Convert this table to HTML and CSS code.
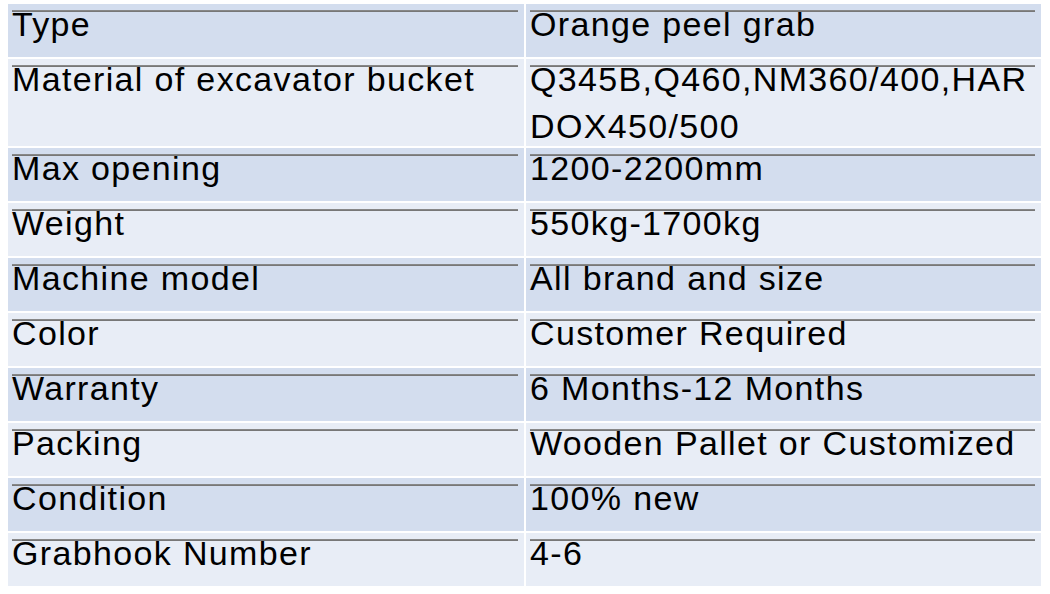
FILE: index.html
```html
<!DOCTYPE html>
<html>
<head>
<meta charset="utf-8">
<link rel="stylesheet" href="styles.css">
</head>
<body>
<div class="spec">
  <div class="cell odd"><p>Type</p></div>
  <div class="cell odd"><p>Orange peel grab</p></div>
  <div class="cell even tall"><p>Material of excavator bucket</p></div>
  <div class="cell even tall"><p>Q345B,Q460,NM360/400,HAR<br>DOX450/500</p></div>
  <div class="cell odd"><p>Max opening</p></div>
  <div class="cell odd"><p>1200-2200mm</p></div>
  <div class="cell even"><p>Weight</p></div>
  <div class="cell even"><p>550kg-1700kg</p></div>
  <div class="cell odd"><p>Machine model</p></div>
  <div class="cell odd"><p>All brand and size</p></div>
  <div class="cell even"><p>Color</p></div>
  <div class="cell even"><p>Customer Required</p></div>
  <div class="cell odd"><p>Warranty</p></div>
  <div class="cell odd"><p>6 Months-12 Months</p></div>
  <div class="cell even"><p>Packing</p></div>
  <div class="cell even"><p>Wooden Pallet or Customized</p></div>
  <div class="cell odd"><p>Condition</p></div>
  <div class="cell odd"><p>100% new</p></div>
  <div class="cell even"><p>Grabhook Number</p></div>
  <div class="cell even"><p>4-6</p></div>
</div>
</body>
</html>
```
FILE: styles.css
```css
html, body {
  margin: 0;
  padding: 0;
  background: #ffffff;
}
body {
  padding: 4px 0 0 8px;
  font-family: "Liberation Sans", Arial, sans-serif;
  color: #000;
}
.spec {
  display: grid;
  grid-template-columns: 516px 515px;
  column-gap: 2px;
  row-gap: 2px;
}
.cell {
  position: relative;
  height: 53px;
  padding-left: 4px;
  box-sizing: border-box;
}
.cell.tall {
  height: 87px;
}
.cell::before {
  content: "";
  position: absolute;
  top: 6px;
  left: 4px;
  right: 6px;
  height: 2px;
  background: linear-gradient(#8f8f8f, #6f6f6f);
}
.odd { background: #d3ddee; }
.even { background: #e8edf6; }
.cell p {
  position: relative;
  margin: -3px 0 0 0;
  font-size: 34px;
  line-height: 47px;
  letter-spacing: 1.35px;
  white-space: nowrap;
}
```
